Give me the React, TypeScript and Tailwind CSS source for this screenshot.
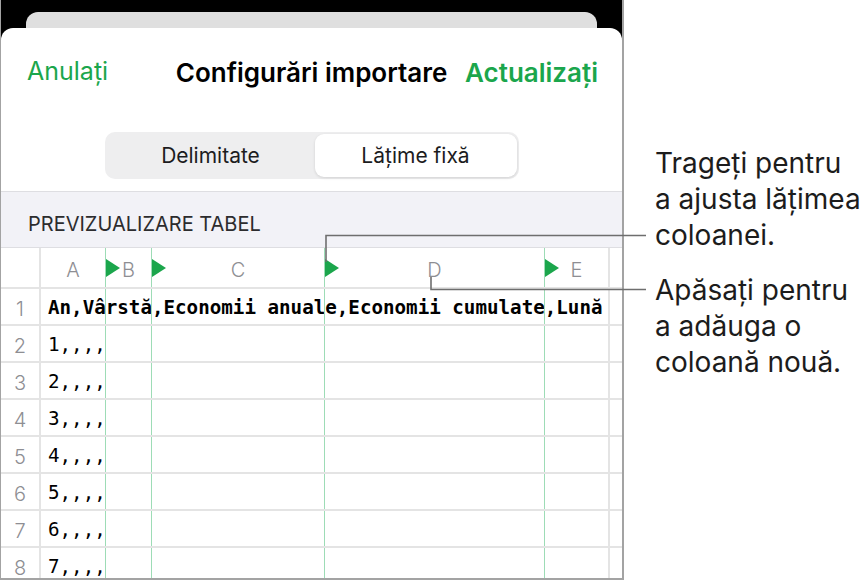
const GREEN = 'text-[#1ba64c]';

const rows = ['1,,,,', '2,,,,', '3,,,,', '4,,,,', '5,,,,', '6,,,,', '7,,,,'];

function Triangle() {
  return (
    <svg width="14" height="18" viewBox="0 0 14 18" className="absolute left-0 top-[11px]">
      <path d="M0 0 L14 9 L0 18 Z" fill="#1ba64c" />
    </svg>
  );
}

function HeaderCell({ label, marker, className }: { label: string; marker?: boolean; className: string }) {
  return (
    <div className={`relative flex items-center justify-center pt-[4px] ${className}`}>
      {marker && <Triangle />}
      <span className="text-[20px] font-light text-[#8e8e93]">{label}</span>
    </div>
  );
}

function Row({ num, text, bold }: { num: number; text: string; bold?: boolean }) {
  return (
    <div className="grid h-[37px] grid-cols-[40px_64px_46px_173px_220px_66px] border-b-2 border-[#e4e4e4]">
      <div className="flex items-center justify-center border-r-2 border-[#e4e4e4] pt-[4px] text-[20px] font-light text-[#8e8e93]">{num}</div>
      <div className="flex items-center overflow-visible whitespace-nowrap pl-[7px] pt-[4px]">
        <span
          className={`text-[19.2px] text-black ${bold ? 'font-bold' : 'font-normal'}`}
          style={{ fontFamily: '"DejaVu Sans Mono", monospace' }}
        >
          {text}
        </span>
      </div>
      <div className="border-l border-[#9ddcb6]" />
      <div className="border-l border-[#9ddcb6]" />
      <div className="border-l border-[#9ddcb6]" />
      <div className="border-l border-r-2 border-l-[#9ddcb6] border-r-[#e4e4e4]" />
    </div>
  );
}

export default function App() {
  return (
    <div className="relative flex h-[580px] w-[867px] overflow-hidden bg-white font-['Inter',sans-serif]">
      {/* device frame */}
      <div className="flex h-[580px] w-[624px] shrink-0 flex-col overflow-hidden border-b-2 border-l border-r-2 border-[#a3a3a3] bg-black">
        <div className="mx-[25px] mt-[12px] h-[30px] shrink-0 rounded-t-[12px] bg-[#dfdfdf]" />
        <div className="-mt-[14px] flex flex-1 flex-col overflow-hidden rounded-t-[12px] bg-white">
          {/* nav bar */}
          <div className="flex h-[88px] shrink-0 items-center justify-between pl-[26px] pr-[24px]">
            <span className={`text-[25px] ${GREEN}`}>Anulați</span>
            <span className="ml-[50px] text-[26px] font-semibold text-black">Configurări importare</span>
            <span className={`text-[26px] font-semibold ${GREEN}`}>Actualizați</span>
          </div>

          {/* segmented control */}
          <div className="mt-[16px] flex justify-center">
            <div className="flex h-[47px] w-[414px] items-center rounded-[10px] bg-[#eeeeef] p-[2px]">
              <div className="flex flex-1 items-center justify-center text-[21px] text-[#1c1c1e]">Delimitate</div>
              <div className="flex h-full w-[202px] items-center justify-center rounded-[9px] bg-white text-[21px] text-[#1c1c1e] shadow-[0_1px_3px_rgba(0,0,0,0.12)]">
                Lățime fixă
              </div>
            </div>
          </div>

          {/* preview section */}
          <div className="mt-[12px] h-[57px] shrink-0 border-t border-b border-[#dedee2] bg-[#f2f2f7] pl-[27px] pt-[20px]">
            <span className="text-[20px] leading-[24px] text-[#2c2c2e]">PREVIZUALIZARE TABEL</span>
          </div>

          {/* table */}
          <div className="flex flex-col">
            <div className="grid h-[41px] grid-cols-[40px_64px_46px_173px_220px_66px] border-b-2 border-[#e4e4e4]">
              <div className="border-r-2 border-[#e4e4e4]" />
              <HeaderCell label="A" className="" />
              <HeaderCell label="B" marker className="border-l border-[#9ddcb6]" />
              <HeaderCell label="C" marker className="border-l border-[#9ddcb6]" />
              <HeaderCell label="D" marker className="border-l border-[#9ddcb6]" />
              <HeaderCell label="E" marker className="border-l border-r-2 border-l-[#9ddcb6] border-r-[#e4e4e4]" />
            </div>
            <Row num={1} text="An,Vârstă,Economii anuale,Economii cumulate,Lună" bold />
            {rows.map((r, i) => (
              <Row key={r} num={i + 2} text={r} />
            ))}
          </div>
        </div>
      </div>

      {/* callouts */}
      <div className="flex flex-col pl-[31px] pt-[145px] text-[28px] leading-[36px] text-[#1c1c1c]">
        <p className="whitespace-nowrap">
          Trageți pentru
          <br />a ajusta lățimea
          <br />
          coloanei.
        </p>
        <p className="mt-[19px] whitespace-nowrap">
          Apăsați pentru
          <br />a adăuga o
          <br />
          coloană nouă.
        </p>
      </div>

      <svg className="pointer-events-none absolute inset-0" width="867" height="580">
        <path d="M326 262 V235.5 H646" fill="none" stroke="#6e6e6e" strokeWidth="1.6" />
        <path d="M431 277 V289.5 H646" fill="none" stroke="#6e6e6e" strokeWidth="1.6" />
      </svg>
    </div>
  );
}
